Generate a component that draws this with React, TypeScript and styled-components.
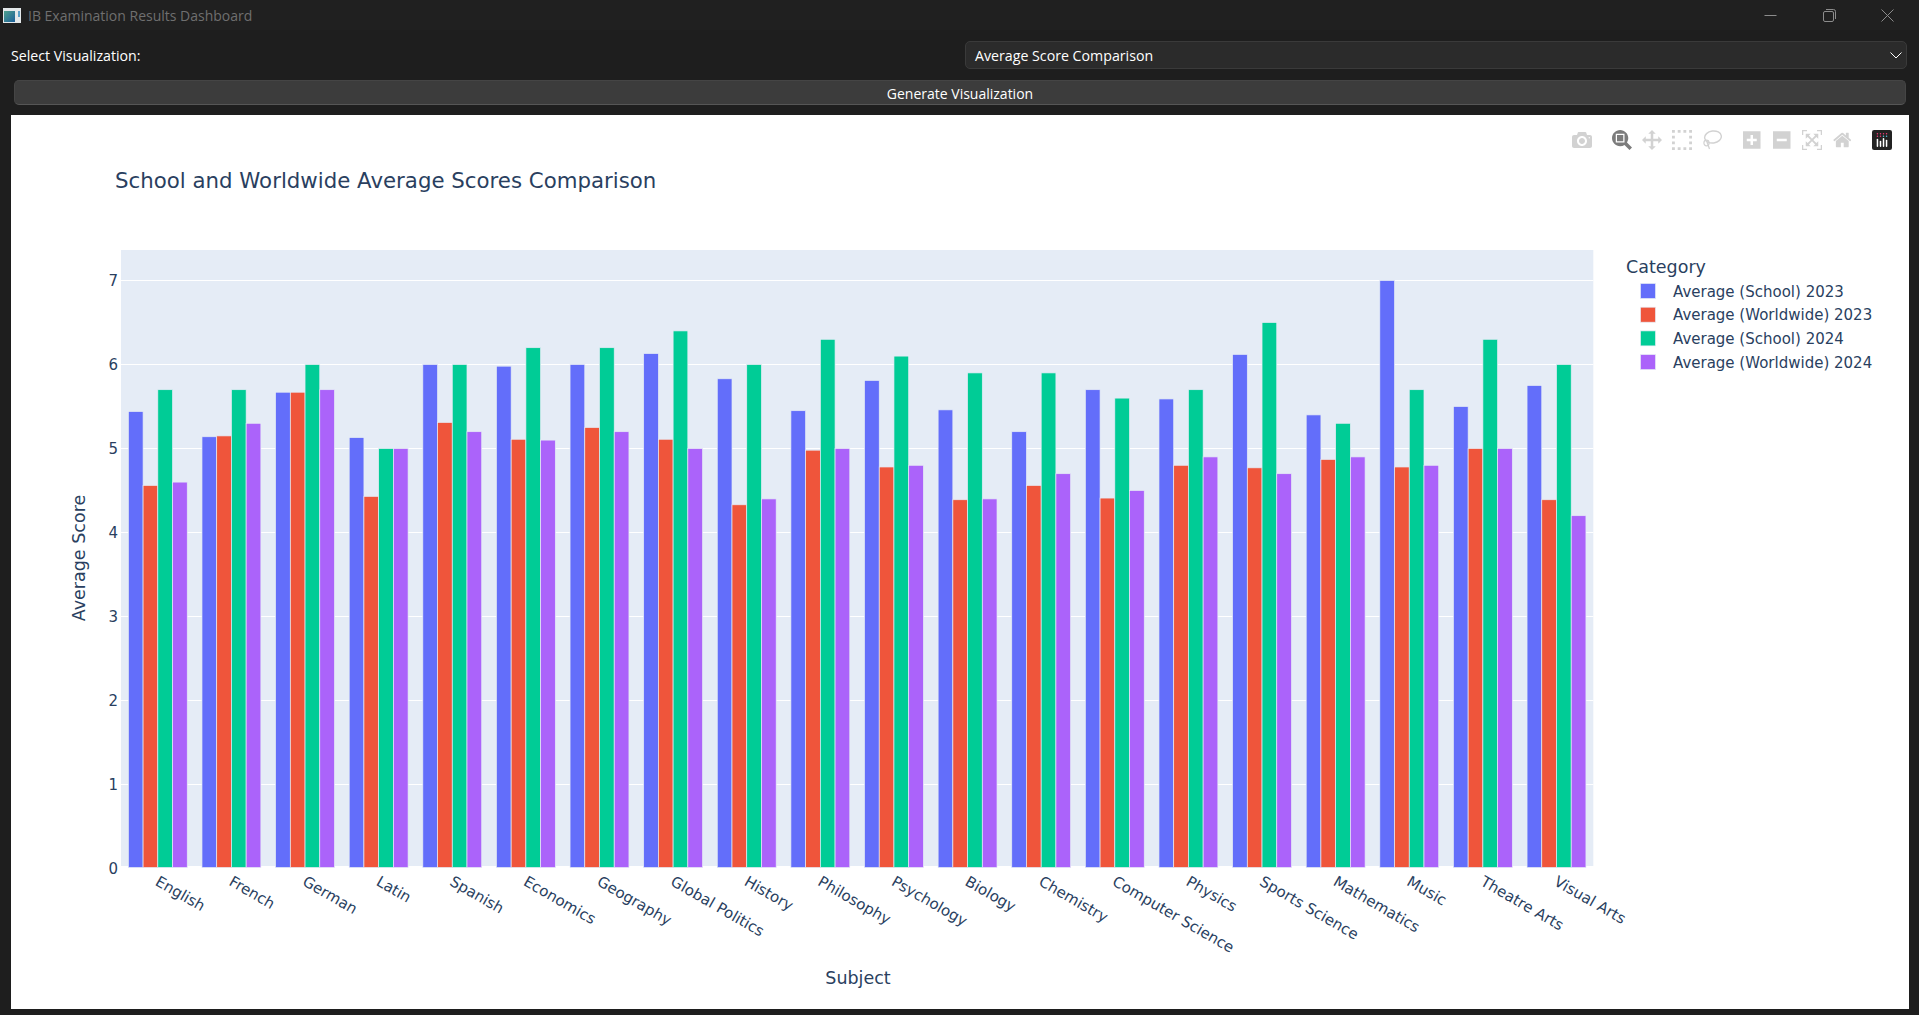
import React from 'react';
import styled, { createGlobalStyle } from 'styled-components';

const GlobalStyle = createGlobalStyle`
  html, body {
    margin: 0;
    padding: 0;
    height: 100%;
    background: #1e1e1e;
    overflow: hidden;
  }
`;

const Window = styled.div`
  height: 100vh;
  display: flex;
  flex-direction: column;
  font-family: "Open Sans", "Noto Sans", sans-serif;
  color: #fff;
`;

const TitleBar = styled.div`
  height: 30px;
  flex: none;
  display: flex;
  align-items: center;
  background: #202020;
  padding: 0 2px 0 3px;
`;

const AppTitle = styled.span`
  margin-left: 7px;
  flex: 1;
  font-size: 14px;
  color: #6f6f6f;
`;

const WindowButton = styled.div`
  width: 58.5px;
  height: 30px;
  display: flex;
  align-items: center;
  justify-content: center;
  color: #8c8c8c;
`;

const ControlRow = styled.div`
  height: 28px;
  margin-top: 11px;
  padding: 0 12px 0 11px;
  display: grid;
  grid-template-columns: 954px 1fr;
  align-items: center;
  font-size: 14.2px;
`;

const Select = styled.div`
  height: 28px;
  box-sizing: border-box;
  display: flex;
  align-items: center;
  justify-content: space-between;
  padding: 0 4px 0 9px;
  background: #2b2b2b;
  border: 1px solid #3a3a3a;
  border-radius: 5px;
`;

const GenerateButton = styled.div`
  height: 25px;
  box-sizing: border-box;
  margin: 11px 13px 10px 14px;
  padding-top: 1px;
  display: flex;
  align-items: center;
  justify-content: center;
  font-size: 14px;
  background: #3c3c3c;
  border: 1px solid #454545;
  border-bottom-color: #565656;
  border-radius: 5px;
`;

const ChartPanel = styled.div`
  position: relative;
  flex: 1;
  margin: 0 10px 6px 11px;
  background: #fff;
  overflow: hidden;
`;

const ChartSvg = styled.svg`
  display: block;
  font-family: "DejaVu Sans", Verdana, sans-serif;
`;

const ChartTitle = styled.text`
  font-size: 21.3px;
  fill: #2a3f5f;
`;

const TickLabel = styled.text`
  font-size: 15px;
  fill: #2a3f5f;
`;

const AxisTitle = styled.text`
  font-size: 17.5px;
  fill: #2a3f5f;
`;

const LegendTitle = styled.text`
  font-size: 17.5px;
  fill: #2a3f5f;
`;

const LegendLabel = styled.text`
  font-size: 15px;
  fill: #2a3f5f;
`;

const Modebar = styled.div`
  position: absolute;
  top: 15px;
  right: 12px;
  display: flex;
  gap: 10px;
`;

const ModebarGroup = styled.div`
  display: flex;
`;

const ModebarButton = styled.div<{ $active?: boolean }>`
  width: 30px;
  height: 20px;
  display: flex;
  justify-content: center;
  color: ${p => (p.$active ? '#7c7c7c' : '#d2d2d2')};
  svg { display: block; }
`;

const subjects: [string, number, number, number, number][] = [
  ['English', 5.44, 4.56, 5.7, 4.6],
  ['French', 5.14, 5.15, 5.7, 5.3],
  ['German', 5.67, 5.67, 6, 5.7],
  ['Latin', 5.13, 4.43, 5, 5],
  ['Spanish', 6, 5.31, 6, 5.2],
  ['Economics', 5.98, 5.11, 6.2, 5.1],
  ['Geography', 6, 5.25, 6.2, 5.2],
  ['Global Politics', 6.13, 5.11, 6.4, 5],
  ['History', 5.83, 4.33, 6, 4.4],
  ['Philosophy', 5.45, 4.98, 6.3, 5],
  ['Psychology', 5.81, 4.78, 6.1, 4.8],
  ['Biology', 5.46, 4.39, 5.9, 4.4],
  ['Chemistry', 5.2, 4.56, 5.9, 4.7],
  ['Computer Science', 5.7, 4.41, 5.6, 4.5],
  ['Physics', 5.59, 4.8, 5.7, 4.9],
  ['Sports Science', 6.12, 4.77, 6.5, 4.7],
  ['Mathematics', 5.4, 4.87, 5.3, 4.9],
  ['Music', 7, 4.78, 5.7, 4.8],
  ['Theatre Arts', 5.5, 5, 6.3, 5],
  ['Visual Arts', 5.75, 4.39, 6, 4.2],
];

const series = [
  { name: 'Average (School) 2023', color: '#636efa' },
  { name: 'Average (Worldwide) 2023', color: '#ef553b' },
  { name: 'Average (School) 2024', color: '#00cc96' },
  { name: 'Average (Worldwide) 2024', color: '#ab63fa' },
];

// plot area, in panel pixels
const PLOT_LEFT = 110;
const PLOT_TOP = 135;
const PLOT_WIDTH = 1472.3;
const PLOT_BOTTOM = 751;
const ZERO_Y = 753.5;
const UNIT = 84;
const GROUP = PLOT_WIDTH / subjects.length;
const BAR = (GROUP * 0.8) / 4;

const toY = (v: number) => ZERO_Y - v * UNIT;

const icons = {
  camera: 'm500 450c-83 0-150-67-150-150 0-83 67-150 150-150 83 0 150 67 150 150 0 83-67 150-150 150z m400 150h-120c-16 0-34 13-39 29l-31 93c-6 15-23 28-40 28h-340c-16 0-34-13-39-28l-31-94c-6-15-23-28-40-28h-120c-55 0-100-45-100-100v-450c0-55 45-100 100-100h800c55 0 100 45 100 100v450c0 55-45 100-100 100z m-400-550c-138 0-250 112-250 250 0 138 112 250 250 250 138 0 250-112 250-250 0-138-112-250-250-250z m365 380c-19 0-35 16-35 35 0 19 16 35 35 35 19 0 35-16 35-35 0-19-16-35-35-35z',
  zoom: 'm1000-25l-250 251c40 63 63 138 63 218 0 224-182 406-407 406-224 0-406-182-406-406s183-406 407-406c80 0 155 22 218 62l250-250 125 125z m-812 250l0 438 437 0 0-438-437 0z m62 375l313 0 0-312-313 0 0 312z',
  pan: 'm1000 350l-187 188 0-125-250 0 0 250 125 0-188 187-187-187 125 0 0-250-250 0 0 125-188-188 186-187 0 125 252 0 0-250-125 0 187-188 188 188-125 0 0 250 250 0 0-126 187 188z',
  select: 'm0 850l0-143 143 0 0 143-143 0z m286 0l0-143 143 0 0 143-143 0z m285 0l0-143 143 0 0 143-143 0z m286 0l0-143 143 0 0 143-143 0z m-857-286l0-143 143 0 0 143-143 0z m857 0l0-143 143 0 0 143-143 0z m-857-285l0-143 143 0 0 143-143 0z m857 0l0-143 143 0 0 143-143 0z m-857-286l0-143 143 0 0 143-143 0z m286 0l0-143 143 0 0 143-143 0z m285 0l0-143 143 0 0 143-143 0z m286 0l0-143 143 0 0 143-143 0z',
  plus: 'm1 787l0-875 875 0 0 875-875 0z m687-500l-187 0 0-187-125 0 0 187-188 0 0 125 188 0 0 187 125 0 0-187 187 0 0-125z',
  minus: 'm0 788l0-876 875 0 0 876-875 0z m688-500l-500 0 0 125 500 0 0-125z',
  autoscale: 'm250 850l-187 0-63 0 0-62 0-188 63 0 0 188 187 0 0 62z m688 0l-188 0 0-62 188 0 0-188 62 0 0 188 0 62-62 0z m-875-938l0 188-63 0 0-188 0-62 63 0 187 0 0 62-187 0z m875 188l0-188-188 0 0-62 188 0 62 0 0 62 0 188-62 0z m-125 188l-1 0-93-94-156 156 156 156 92-93 2 0 0 250-250 0 0-2 93-92-156-156-156 156 94 92 0 2-250 0 0-250 0 0 93 93 157-156-157-156-93 94 0 0 0-250 250 0 0 0-94 93 156 157 156-157-93-93 0 0 250 0 0 250z',
  home: 'm786 296v-267q0-15-11-26t-25-10h-214v214h-143v-214h-214q-15 0-25 10t-11 26v267q0 1 0 2t0 2l321 264 321-264q1-1 1-4z m124 39l-34-41q-5-5-12-6h-2q-7 0-12 3l-386 322-386-322q-7-4-13-4-7 2-12 7l-35 41q-4 5-3 13t6 12l401 334q18 15 42 15t43-15l136-114v109q0 8 5 13t13 5h107q8 0 13-5t5-13v-227l122-102q5-5 6-12t-4-13z',
};

const PlotlyIcon = ({ d, width = 1000 }: { d: string; width?: number }) => (
  <svg width={(20 * width) / 1000} height={20} viewBox={`0 0 ${width} 1000`}>
    <path d={d} fill="currentColor" transform="matrix(1 0 0 -1 0 850)" />
  </svg>
);

const LassoIcon = () => (
  <svg width={20} height={20} viewBox="0 0 20 20" fill="none" stroke="currentColor">
    <ellipse cx="11" cy="7" rx="8.4" ry="6" strokeWidth="1.4" transform="rotate(-8 11 7)" />
    <ellipse cx="4.5" cy="13" rx="2.6" ry="2.8" strokeWidth="1.2" />
    <path d="M5 12 7.5 19" strokeWidth="1.3" />
  </svg>
);

const logoBars = [
  [36, 62, 108], [56, 76, 108], [76, 58, 108], [96, 70, 108],
];

const LogoIcon = () => (
  <svg width={20} height={20} viewBox="0 0 132 132">
    <rect width="132" height="132" rx="14" fill="#222" />
    {[36, 56, 76, 96].map(x => <circle key={x} cx={x} cy={24} r={5} fill="#ef3c78" />)}
    <circle cx={36} cy={42} r={5} fill="#ef3c78" />
    <circle cx={56} cy={42} r={5} fill="#ef3c78" />
    <circle cx={76} cy={42} r={5} fill="#58c8e0" />
    <circle cx={96} cy={42} r={5} fill="#58c8e0" />
    {logoBars.map(([x, y1, y2]) => (
      <line key={x} x1={x} x2={x} y1={y1} y2={y2} stroke="#fff" strokeWidth="10" strokeLinecap="round" />
    ))}
  </svg>
);

const AppIcon = () => (
  <svg width={18} height={15} viewBox="0 0 18 15">
    <defs>
      <linearGradient id="appFill" x1="0" y1="0" x2="1" y2="1">
        <stop offset="0" stopColor="#4fa08c" />
        <stop offset="1" stopColor="#1c5f9a" />
      </linearGradient>
    </defs>
    <rect width="18" height="15" fill="#e4e8ea" />
    <rect x="1" y="3" width="11" height="11" fill="url(#appFill)" />
    <rect x="15" y="3" width="2" height="6" fill="#5aa0c8" />
  </svg>
);

const Chart = () => (
  <ChartSvg width="1898" height="894" viewBox="0 0 1898 894">
    <ChartTitle x={104} y={72.5}>School and Worldwide Average Scores Comparison</ChartTitle>

    <rect x={PLOT_LEFT} y={PLOT_TOP} width={PLOT_WIDTH} height={PLOT_BOTTOM - PLOT_TOP} fill="#e5ecf6" />
    {[1, 2, 3, 4, 5, 6, 7].map(v => (
      <rect key={v} x={PLOT_LEFT} y={Math.floor(toY(v))} width={PLOT_WIDTH} height={1} fill="#fff" />
    ))}

    {subjects.map(([name, ...values], i) =>
      values.map((v, j) => (
        <rect
          key={`${name}-${j}`}
          x={PLOT_LEFT + i * GROUP + GROUP * 0.1 + j * BAR}
          y={toY(v)}
          width={BAR}
          height={v * UNIT - 1}
          fill={series[j].color}
          stroke="#e5ecf6"
          strokeWidth="0.7"
        />
      ))
    )}

    {[0, 1, 2, 3, 4, 5, 6, 7].map(v => (
      <TickLabel key={v} x={107} y={toY(v) + 5.5} textAnchor="end">{v}</TickLabel>
    ))}

    {subjects.map(([name], i) => {
      const x = PLOT_LEFT + (i + 0.5) * GROUP - 3.5;
      return (
        <TickLabel key={name} x={x} y={769.5} transform={`rotate(30 ${x} 769.5)`}>{name}</TickLabel>
      );
    })}

    <AxisTitle x={847} y={869} textAnchor="middle">Subject</AxisTitle>
    <AxisTitle x={74} y={443} textAnchor="middle" transform="rotate(-90 74 443)">Average Score</AxisTitle>

    <LegendTitle x={1615} y={158}>Category</LegendTitle>
    {series.map((s, i) => (
      <g key={s.name}>
        <rect x={1629.5} y={168.5 + i * 23.7} width={15} height={15} fill={s.color} stroke="#e5ecf6" strokeWidth="0.7" />
        <LegendLabel x={1662} y={181.5 + i * 23.7}>{s.name}</LegendLabel>
      </g>
    ))}
  </ChartSvg>
);

const App = () => (
  <>
    <GlobalStyle />
    <Window>
      <TitleBar>
        <AppIcon />
        <AppTitle>IB Examination Results Dashboard</AppTitle>
        <WindowButton>
          <svg width="13" height="13" viewBox="0 0 13 13" stroke="currentColor" fill="none">
            <path d="M0.5 6.5h12" />
          </svg>
        </WindowButton>
        <WindowButton>
          <svg width="13" height="13" viewBox="0 0 13 13" stroke="currentColor" fill="none">
            <rect x="0.5" y="2.5" width="10" height="10" rx="1.5" />
            <path d="M3 0.5h7.5a2 2 0 0 1 2 2V10" />
          </svg>
        </WindowButton>
        <WindowButton>
          <svg width="13" height="13" viewBox="0 0 13 13" stroke="currentColor" fill="none">
            <path d="M0.5 0.5l12 12M12.5 0.5l-12 12" />
          </svg>
        </WindowButton>
      </TitleBar>

      <ControlRow>
        <span>Select Visualization:</span>
        <Select>
          <span>Average Score Comparison</span>
          <svg width="12" height="7" viewBox="0 0 12 7" fill="none" stroke="#fff">
            <path d="M0.5 0.5 6 6l5.5-5.5" />
          </svg>
        </Select>
      </ControlRow>

      <GenerateButton>Generate Visualization</GenerateButton>

      <ChartPanel>
        <Chart />
        <Modebar>
          <ModebarGroup>
            <ModebarButton><PlotlyIcon d={icons.camera} /></ModebarButton>
          </ModebarGroup>
          <ModebarGroup>
            <ModebarButton $active><PlotlyIcon d={icons.zoom} /></ModebarButton>
            <ModebarButton><PlotlyIcon d={icons.pan} /></ModebarButton>
            <ModebarButton><PlotlyIcon d={icons.select} /></ModebarButton>
            <ModebarButton><LassoIcon /></ModebarButton>
          </ModebarGroup>
          <ModebarGroup>
            <ModebarButton><PlotlyIcon d={icons.plus} width={875} /></ModebarButton>
            <ModebarButton><PlotlyIcon d={icons.minus} width={875} /></ModebarButton>
            <ModebarButton><PlotlyIcon d={icons.autoscale} /></ModebarButton>
            <ModebarButton><PlotlyIcon d={icons.home} width={928.6} /></ModebarButton>
          </ModebarGroup>
          <ModebarGroup>
            <ModebarButton><LogoIcon /></ModebarButton>
          </ModebarGroup>
        </Modebar>
      </ChartPanel>
    </Window>
  </>
);

export default App;
